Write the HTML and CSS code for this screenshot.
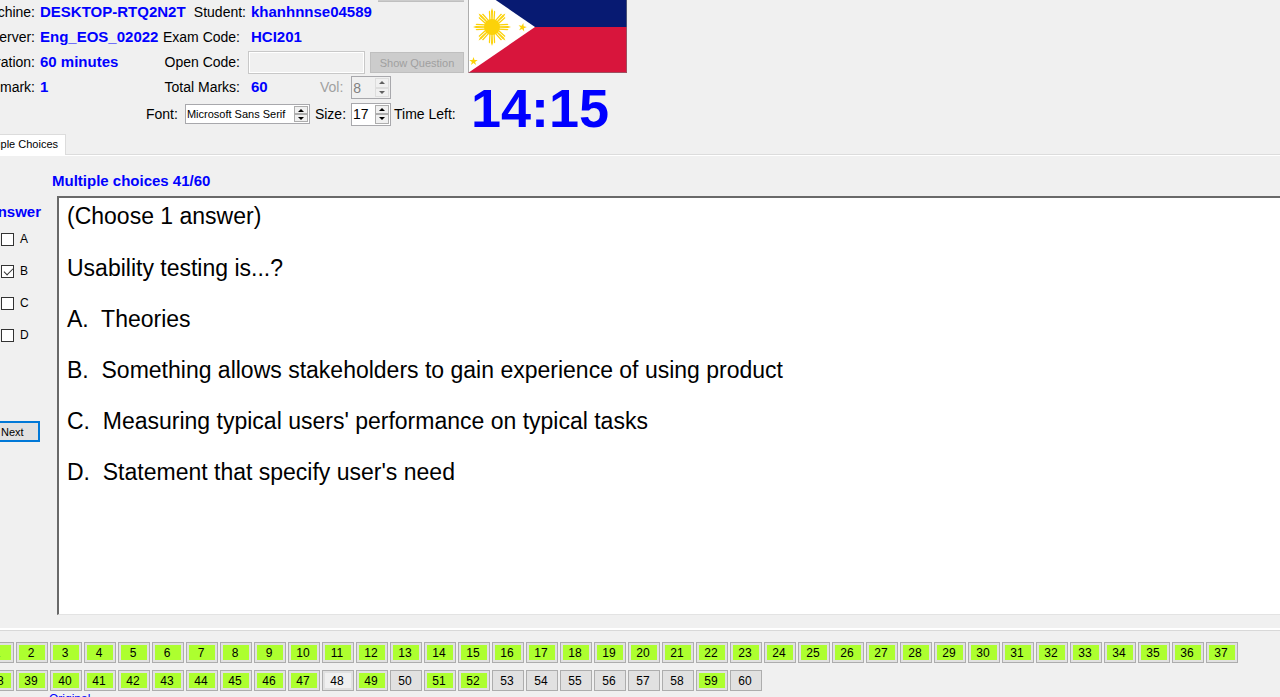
FILE: index.html
```html
<!DOCTYPE html>
<html lang="en">
<head>
<meta charset="utf-8">
<title>Exam client</title>
<link rel="stylesheet" href="styles.css">
</head>
<body>
<header class="top">
  <div class="info">
    <div class="row row-first">
      <span class="label label-a">Machine:</span><span class="value value-a">DESKTOP-RTQ2N2T</span>
      <span class="label label-b">Student:</span><span class="value value-b">khanhnnse04589</span>
    </div>
    <div class="row">
      <span class="label label-a">Server:</span><span class="value value-a">Eng_EOS_02022</span>
      <span class="label label-b">Exam Code:</span><span class="value value-b">HCI201</span>
    </div>
    <div class="row">
      <span class="label label-a">Duration:</span><span class="value value-a">60 minutes</span>
      <label class="label label-b" for="open">Open Code:</label>
      <input class="open" id="open" type="text" disabled>
      <button class="show" type="button" disabled>Show Question</button>
    </div>
    <div class="row">
      <span class="label label-a">Q mark:</span><span class="value value-a">1</span>
      <span class="label label-b">Total Marks:</span><span class="value value-b value-short">60</span>
      <label class="label label-vol" for="vol">Vol:</label>
      <span class="spin spin-vol"><input id="vol" type="text" value="8" disabled><span class="arrows"><button type="button" disabled aria-label="Volume up"><svg viewBox="0 0 6 3"><path d="M3 0L6 3H0z"/></svg></button><button type="button" disabled aria-label="Volume down"><svg viewBox="0 0 6 3"><path d="M0 0H6L3 3z"/></svg></button></span></span>
    </div>
    <div class="row row-font">
      <label class="label" for="font">Font:</label>
      <span class="spin spin-font"><input id="font" type="text" value="Microsoft Sans Serif"><span class="arrows"><button type="button" aria-label="Next font"><svg viewBox="0 0 6 3"><path d="M3 0L6 3H0z"/></svg></button><button type="button" aria-label="Previous font"><svg viewBox="0 0 6 3"><path d="M0 0H6L3 3z"/></svg></button></span></span>
      <label class="label" for="size">Size:</label>
      <span class="spin spin-size"><input id="size" type="text" value="17"><span class="arrows"><button type="button" aria-label="Size up"><svg viewBox="0 0 6 3"><path d="M3 0L6 3H0z"/></svg></button><button type="button" aria-label="Size down"><svg viewBox="0 0 6 3"><path d="M0 0H6L3 3z"/></svg></button></span></span>
      <span class="label">Time Left:</span>
    </div>
    <span class="edge"></span>
  </div>
  <div class="side">
    <svg class="flag" viewBox="0 0 159 73" role="img" aria-label="Flag of the Philippines">
      <path fill="#071a72" d="M0 0H159V27H0z"/>
      <path fill="#d8153c" d="M0 27H159V73H0z"/>
      <path fill="#fff" d="M0-19L67 27L0 73z"/>
      <g fill="#fcd209">
        <circle cx="24" cy="27" r="8"/>
        <g id="quarter">
          <g id="ray"><path d="M23.300 20L23 11L24 8L25 11L24.700 20zM21.300 20L20.800 11.500L22 10.500L22.600 20zM26.700 20L27.200 11.500L26 10.500L25.400 20z"/></g>
          <use href="#ray" transform="rotate(45 24 27)"/>
        </g>
        <use href="#quarter" transform="rotate(90 24 27)"/>
        <use href="#quarter" transform="rotate(180 24 27)"/>
        <use href="#quarter" transform="rotate(270 24 27)"/>
        <g id="star"><path d="M5.500 57L6.500 60H9.700L7.100 61.900L8.100 65L5.500 63.100L2.900 65L3.900 61.900L1.300 60H4.500z"/></g>
        <use href="#star" transform="translate(49 -34) rotate(12 5.500 61)"/>
      </g>
      <path fill="none" stroke="#777" stroke-opacity=".6" d="M.5 0V72.500H158.500V0"/>
    </svg>
    <div class="timer">14:15</div>
  </div>
</header>

<nav class="tabs"><button class="tab" type="button">Multiple Choices</button></nav>

<main class="exam">
  <h1 class="title">Multiple choices 41/60</h1>
  <div class="work">
    <div class="answers">
      <h2 class="heading">Answer</h2>
      <label class="choice"><input type="checkbox">A</label>
      <label class="choice"><input type="checkbox" checked>B</label>
      <label class="choice"><input type="checkbox">C</label>
      <label class="choice"><input type="checkbox">D</label>
      <button class="next" type="button">Next</button>
    </div>
    <section class="question">
      <p>(Choose 1 answer)</p>
      <p>Usability testing is...?</p>
      <p>A.&nbsp; Theories</p>
      <p>B.&nbsp; Something allows stakeholders to gain experience of using product</p>
      <p>C.&nbsp; Measuring typical users' performance on typical tasks</p>
      <p>D.&nbsp; Statement that specify user's need</p>
    </section>
  </div>
</main>

<footer class="numbers">
  <div class="line" id="line1"></div>
  <div class="line" id="line2"></div>
  <p class="status">Original</p>
</footer>
<script src="numbers.js"></script>
</body>
</html>
```
FILE: styles.css
```css
* { box-sizing: border-box; }
body {
  margin: 0;
  height: 100vh;
  overflow: hidden;
  display: flex;
  flex-direction: column;
  background: #f0f0f0;
  color: #000;
  font: 11px "Liberation Sans", Arial, sans-serif;
}
h1, h2, p { margin: 0; }
button, input { font: inherit; margin: 0; padding: 0; border-radius: 0; }

.top { display: flex; flex: none; height: 134px; }
.info { position: relative; width: 468px; flex: none; }
.row { display: flex; align-items: center; height: 25px; }
.label, .value { font-size: 14px; line-height: 16px; padding-bottom: 1px; white-space: nowrap; flex: none; }
.label-a { width: 35px; display: flex; justify-content: flex-end; overflow: hidden; }
.value { color: #00f; font-weight: bold; font-size: 15px; }
.value-a { width: 123px; margin-left: 5px; }
.label-b { width: 77px; display: flex; justify-content: flex-end; }
.row-first .label-b { width: 83px; }
.value-b { margin-left: 11px; }
.row-first .value-b { margin-left: 5px; }
.value-short { width: 69px; }
.open { width: 117px; height: 23px; margin-left: 8px; border: 1px solid #c8c8c8; background: #f0f0f0; box-shadow: inset 0 0 0 1px #fff; }
.show { width: 94px; height: 21px; margin-left: 5px; border: 1px solid #bfbfbf; background: #ccc; color: #a0a0a0; font-size: 11px; }
.label-vol { color: #a0a0a0; }
.spin { display: flex; flex: none; background: #fff; border: 1px solid #a8a8ac; padding: 1px; }
.spin input { flex: 1; min-width: 0; border: 0; background: none; color: #000; outline: 0; }
.arrows { display: flex; flex-direction: column; width: 14px; flex: none; }
.arrows button { flex: 1; display: flex; align-items: center; justify-content: center; border: 1px solid #adadad; background: #f0f0f0; }
.arrows svg { width: 6px; height: 3px; }
.spin-vol { width: 40px; height: 23px; margin-left: 8px; background: #f0f0f0; font-size: 14px; }
.spin-vol input { color: #808080; }
.spin-vol .arrows button { border-color: #ddd; }
.spin-vol .arrows path { fill: #606060; }
.row-font { height: 28px; padding-left: 146px; gap: 5px; }
.spin-font { width: 125px; height: 20px; margin-left: 2px; }
.spin-size { width: 40px; height: 23px; font-size: 14px; margin-right: -2px; }
.edge { position: absolute; left: 378px; top: 0; width: 86px; height: 2px; background: #ccc; border-bottom: 1px solid #bfbfbf; }
.flag { display: block; width: 159px; height: 73px; }
.timer { color: #00f; font-size: 54px; line-height: 60px; font-weight: bold; padding: 5px 0 0 3px; }

.tabs { display: flex; flex: none; height: 21px; border-bottom: 1px solid #dcdcdc; box-shadow: 0 1px #fff; }
.tab { width: 66px; height: 21px; display: flex; justify-content: flex-end; align-items: center; padding: 0 7px 2px 0; background: #fff; border: 1px solid #dcdcdc; border-width: 1px 1px 0 0; white-space: nowrap; overflow: hidden; }

.exam { flex: none; padding-top: 17px; }
.title { color: #00f; font-size: 15px; line-height: 18px; padding-left: 52px; margin-bottom: 6px; }
.work { display: flex; }
.answers { width: 57px; flex: none; overflow: hidden; display: flex; flex-direction: column; align-items: flex-start; }
.heading { color: #00f; font-size: 15px; line-height: 16px; padding-top: 8px; width: 41px; display: flex; justify-content: flex-end; margin-bottom: 3px; }
.choice { display: flex; align-items: center; height: 32px; gap: 6px; padding-left: 1px; font-size: 12px; }
.choice input { appearance: none; position: relative; width: 13px; height: 13px; border: 1px solid #333; background: #fff; }
.choice input:checked::after { content: ""; position: absolute; left: 4px; top: 0; width: 4px; height: 8px; border: solid #333; border-width: 0 1px 1px 0; transform: rotate(45deg); }
.next { width: 40px; height: 21px; margin-top: 70px; padding-left: 1px; text-align: left; border: 2px solid #0078d7; border-left: 0; background: #e1e1e1; }
.question { flex: 1; height: 419px; padding: 0 8px; background: #fff; border: solid #696969; border-width: 2px 0 1px 2px; border-color: #696969 #696969 #e3e3e3; font-size: 23px; line-height: 51px; }
.question p:first-child { line-height: 37px; margin-bottom: 8px; }

.numbers { margin-top: 13px; flex: none; border-top: 2px solid #fff; box-shadow: inset 0 1px #d8d8d8; padding-top: 12px; }
.line { display: flex; gap: 2px; margin-left: -18px; }
.line + .line { margin-top: 7px; }
.number { width: 32px; height: 21px; flex: none; border: 1px solid #adadad; background: #e1e1e1; padding: 2px; display: flex; font-size: 12px; color: #000; }
.number span { flex: 1; padding-right: 2px; line-height: 17px; height: 15px; text-align: center; }
.done span { background: #adff2f; }
.current span { background: #f0f0f0; }
.status { color: #00f; font-size: 12px; line-height: 16px; padding-left: 49px; }
```
FILE: numbers.js
```javascript
const unanswered = [50, 53, 54, 55, 56, 57, 58, 60];
for (let n = 1; n <= 60; n++) {
  const button = document.createElement("button");
  button.type = "button";
  button.className = "number";
  if (n === 48) button.classList.add("current");
  else if (!unanswered.includes(n)) button.classList.add("done");
  const text = document.createElement("span");
  text.textContent = n;
  button.append(text);
  document.getElementById(n <= 37 ? "line1" : "line2").append(button);
}
```
